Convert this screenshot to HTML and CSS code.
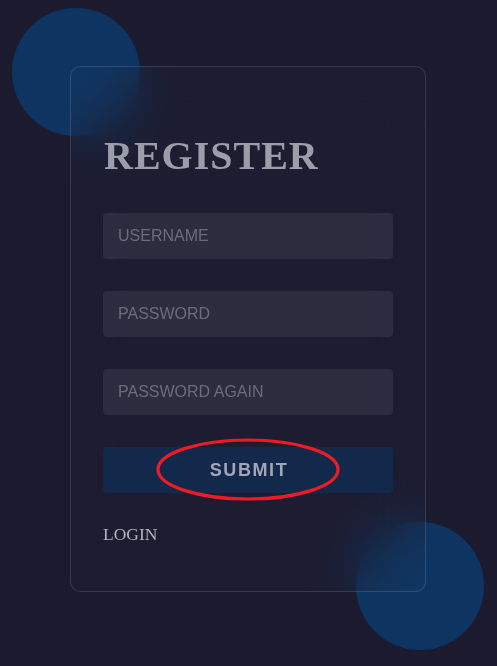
FILE: index.html
```html
<!DOCTYPE html>
<html>
<head>
<meta charset="utf-8">
<title>Register</title>
<link rel="stylesheet" href="styles.css">
</head>
<body>
<div class="page">
  <div class="circle circle-top"></div>
  <div class="circle circle-bottom"></div>
  <form class="card">
    <h1 class="title">REGISTER</h1>
    <input class="field" type="text" placeholder="USERNAME">
    <input class="field" type="password" placeholder="PASSWORD">
    <input class="field" type="password" placeholder="PASSWORD AGAIN">
    <button class="submit" type="button">SUBMIT</button>
    <a class="login" href="#">LOGIN</a>
  </form>
  <svg class="mark" width="185" height="64" viewBox="0 0 185 64">
    <ellipse cx="92" cy="31.5" rx="90" ry="29.5" fill="none" stroke="#ed1c24" stroke-width="3.2"/>
  </svg>
</div>
</body>
</html>
```
FILE: styles.css
```css
html, body {
  margin: 0;
  padding: 0;
  background: #1b1a2e;
  overflow: hidden;
}
.page {
  position: relative;
  width: 497px;
  height: 666px;
  overflow: hidden;
  padding-top: 66px;
  box-sizing: border-box;
}
.circle {
  position: absolute;
  width: 128px;
  height: 128px;
  border-radius: 50%;
  background: #0e3461;
}
.circle-top { left: 12px; top: 8px; }
.circle-bottom { left: 356px; top: 522px; }
.card {
  position: relative;
  margin-left: 70px;
  width: 356px;
  height: 526px;
  box-sizing: border-box;
  border: 1px solid rgba(255, 255, 255, 0.13);
  border-radius: 10px;
  background: rgba(255, 255, 255, 0.01);
  backdrop-filter: blur(28px);
  -webkit-backdrop-filter: blur(28px);
  padding: 65px 32px 0 32px;
  display: flex;
  flex-direction: column;
  align-items: flex-start;
}
.title {
  margin: 0 0 33px 1px;
  font-family: "Liberation Serif", "Times New Roman", serif;
  font-weight: bold;
  font-size: 40px;
  line-height: 48px;
  letter-spacing: 1px;
  color: #9d9da9;
}
.field {
  width: 290px;
  height: 46px;
  box-sizing: border-box;
  border: none;
  outline: none;
  border-radius: 4px;
  background: rgba(255, 255, 255, 0.075);
  padding: 0 15px;
  margin: 0 0 32px 0;
  font-family: "Liberation Sans", Arial, sans-serif;
  font-size: 16px;
  color: #c0c0cc;
}
.field::placeholder {
  color: #6c6c79;
}
.submit {
  width: 290px;
  height: 46px;
  border: none;
  border-radius: 4px;
  background: #13294b;
  color: #a2a6b6;
  font-family: "Liberation Sans", Arial, sans-serif;
  font-weight: bold;
  font-size: 18px;
  letter-spacing: 1.6px;
  padding: 0 0 0 2px;
  margin: 0 0 31px 0;
  cursor: pointer;
}
.login {
  font-family: "Liberation Serif", "Times New Roman", serif;
  font-size: 17.5px;
  line-height: 20px;
  color: #b3b3bf;
  text-decoration: none;
}
.mark {
  position: absolute;
  left: 156px;
  top: 438px;
}
```
